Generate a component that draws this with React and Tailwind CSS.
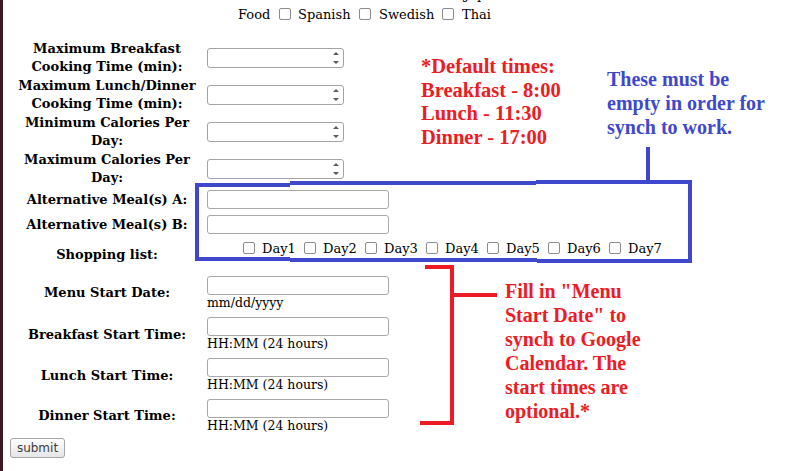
const serif = "font-['DejaVu_Serif',serif]";
const label = `${serif} font-bold text-[13px] leading-[18px] text-center text-black`;

function Box({ className = '' }) {
  return <span className={`inline-block w-[12px] h-[12px] shrink-0 rounded-[2px] border border-[#8c8c8c] bg-white ${className}`} />;
}

function NumberField() {
  return (
    <div className="relative w-[137px] h-[20px]">
      <input className="w-full h-full rounded-[3px] border border-[#a3a3a3] bg-white" />
      <svg className="absolute left-[126px] top-[4px]" width="6" height="13" viewBox="0 0 6 13">
        <path d="M0 3 L3 0 L6 3 Z M0 9 L6 9 L3 12 Z" fill="#5a5a5a" />
      </svg>
    </div>
  );
}

function TextField() {
  return <input className="w-[182px] h-[19px] rounded-[3px] border border-[#a8a8a8] bg-white" />;
}

function Row({ h, children, name }) {
  return (
    <div className={`grid grid-cols-[194px_1fr] gap-x-[3px] items-center ${h}`}>
      <div className={label}>{name}</div>
      <div>{children}</div>
    </div>
  );
}

function TimeRow({ h, name, hint }) {
  return (
    <Row h={h} name={name}>
      <div className="flex flex-col">
        <TextField />
        <span className="text-[12.5px] leading-[16px]">{hint}</span>
      </div>
    </Row>
  );
}

const days = ['Day1', 'Day2', 'Day3', 'Day4', 'Day5', 'Day6', 'Day7'];

export default function App() {
  return (
    <div className="relative flex h-[471px] overflow-hidden bg-white">
      <div className="w-[3px] shrink-0 bg-[#3b1a24]" />

      <div className={`flex-1 -mt-[30px] pl-[7px] ${serif} text-[13px] text-black`}>
        {/* cuisine (scrolled off the top) */}
        <div className="grid grid-cols-[194px_1fr] gap-x-[3px] items-start h-[69px]">
          <div className={`${label} pt-[15px]`}>Cuisine:</div>
          <div className="pt-[16px] leading-[18px]">
            <div className="flex items-center pl-[157px] h-[18px] whitespace-nowrap">
              <Box className="mb-[3px]" />
              <span className="ml-[8px] w-[61px]">Italian</span>
              <Box className="mb-[3px]" />
              <span className="ml-[7px]">Japanese</span>
            </div>
            <div className="flex items-center pl-[31px] h-[18px] mt-[2px] whitespace-nowrap">
              <span className="w-[41px]">Food</span>
              <Box className="mb-[3px]" />
              <span className="ml-[7px] w-[61px]">Spanish</span>
              <Box className="mb-[3px]" />
              <span className="ml-[8px] w-[63px]">Swedish</span>
              <Box className="mb-[3px]" />
              <span className="ml-[8px]">Thai</span>
            </div>
          </div>
        </div>

        <Row h="h-[37px]" name={<>Maximum Breakfast<br />Cooking Time (min):</>}><NumberField /></Row>
        <Row h="h-[37px]" name={<>Maximum Lunch/Dinner<br />Cooking Time (min):</>}><NumberField /></Row>
        <Row h="h-[37px]" name={<>Minimum Calories Per<br />Day:</>}><NumberField /></Row>
        <Row h="h-[37px]" name={<>Maximum Calories Per<br />Day:</>}><NumberField /></Row>
        <Row h="h-[25px]" name="Alternative Meal(s) A:"><TextField /></Row>
        <Row h="h-[25px]" name="Alternative Meal(s) B:"><TextField /></Row>

        <div className="grid grid-cols-[194px_1fr] gap-x-[3px] h-[35px] items-center">
          <div className={label}>Shopping list:</div>
          <div className="self-start pt-[3px] pl-[36px] flex leading-[18px]">
            {days.map((d) => (
              <div key={d} className="flex items-center w-[61px] gap-[7px] whitespace-nowrap">
                <Box className="mb-[3px]" />
                <span>{d}</span>
              </div>
            ))}
          </div>
        </div>

        <TimeRow h="h-[42px]" name="Menu Start Date:" hint="mm/dd/yyyy" />
        <TimeRow h="h-[41px]" name="Breakfast Start Time:" hint="HH:MM (24 hours)" />
        <TimeRow h="h-[41px]" name="Lunch Start Time:" hint="HH:MM (24 hours)" />
        <TimeRow h="h-[40px]" name="Dinner Start Time:" hint="HH:MM (24 hours)" />

        <button className="mt-[2px] h-[20px] w-[55px] rounded-[3px] border border-[#a6a6a6] bg-gradient-to-b from-[#fdfdfd] to-[#e6e6e6] font-['DejaVu_Sans',sans-serif] text-[12px] leading-[18px] text-[#3c3c3c]">
          submit
        </button>
      </div>

      {/* annotations drawn over the form */}
      <svg className="absolute left-0 top-0 pointer-events-none" width="812" height="471">
        <g stroke="#3f48cc" strokeWidth="4" fill="none">
          <path d="M195 185 L290 185 M290 183 L536 183 M536 182 L692 182" />
          <path d="M197 183 L197 261" />
          <path d="M690 180 L690 263" />
          <path d="M195 259 L290 259 M290 260 L537 260 M537 261 L692 261" />
          <path d="M648 147 L648 181" />
        </g>
        <g stroke="#ed1c24" strokeWidth="4" fill="none">
          <path d="M425 267 L452 267 L452 423 L420 423" />
          <path d="M452 295 L497 295" />
        </g>
      </svg>

      <div className="absolute left-[421px] top-[55px] font-['Liberation_Serif',serif] font-bold text-[20.5px] leading-[23.5px] text-[#ed1c24]">
        *Default times:<br />Breakfast - 8:00<br />Lunch - 11:30<br />Dinner - 17:00
      </div>
      <div className="absolute left-[607px] top-[67px] font-['Liberation_Serif',serif] font-bold text-[20px] leading-[24px] text-[#3f48cc]">
        These must be<br />empty in order for<br />synch to work.
      </div>
      <div className="absolute left-[505px] top-[280px] font-['Liberation_Serif',serif] font-bold text-[20px] leading-[23.9px] text-[#ed1c24]">
        Fill in "Menu<br />Start Date" to<br />synch to Google<br />Calendar. The<br />start times are<br />optional.*
      </div>
    </div>
  );
}
